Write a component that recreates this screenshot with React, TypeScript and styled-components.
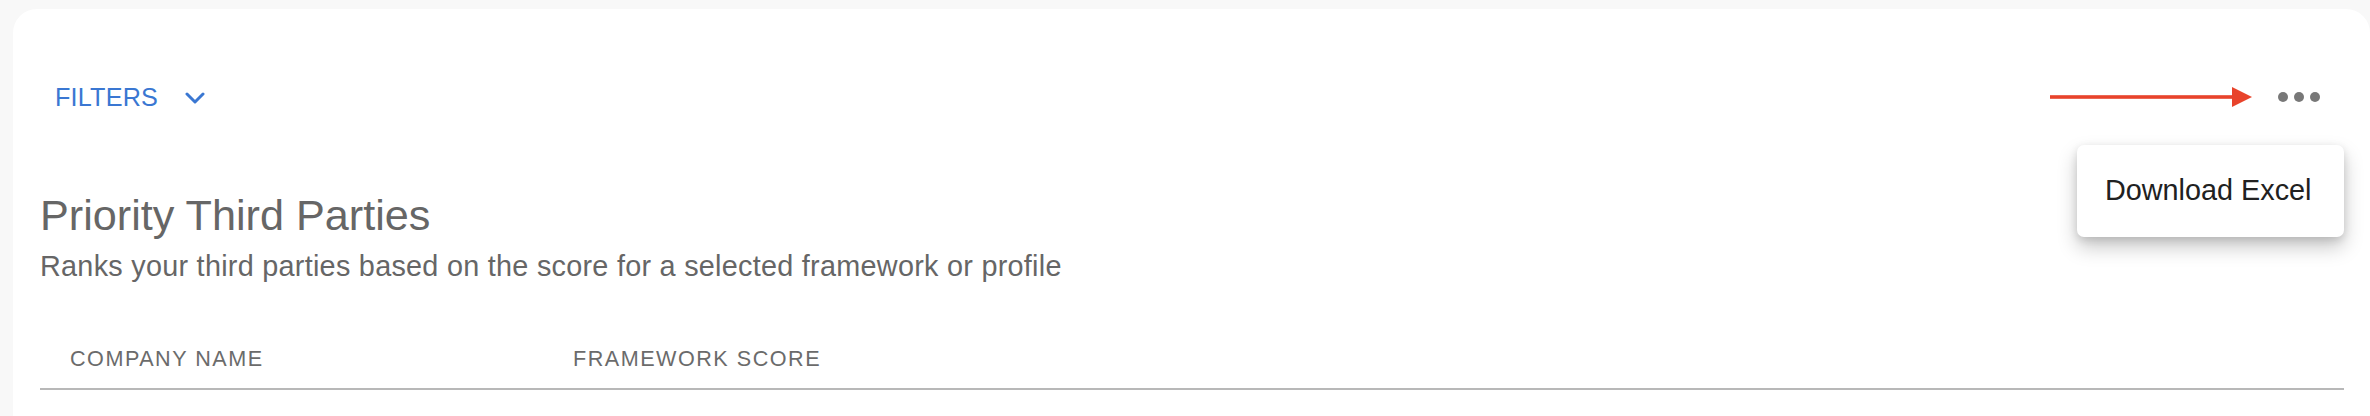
import styled, { createGlobalStyle } from "styled-components"

const GlobalStyle = createGlobalStyle`
  body {
    margin: 0;
    background: #f8f8f8;
    font-family: "Liberation Sans", Arial, Helvetica, sans-serif;
  }
`

const columns = [
  { label: "Company Name", width: 503 },
  { label: "Framework Score", width: 0 },
]

const App = () => {
  return (
    <>
      <GlobalStyle />
      <StyledPage>
        <StyledCard>
          <StyledToolbar>
            <StyledFilterButton>
              FILTERS
              <StyledChevron width="20" height="12" viewBox="0 0 20 12">
                <polyline
                  points="2,2 10,10 18,2"
                  fill="none"
                  stroke="#3a77d2"
                  strokeWidth="3"
                  strokeLinecap="round"
                  strokeLinejoin="round"
                />
              </StyledChevron>
            </StyledFilterButton>
            <StyledActions>
              <svg width="202" height="20" viewBox="0 0 202 20">
                <rect x="0" y="8.2" width="186" height="3.6" fill="#e8432b" />
                <polygon points="182,0 202,10 182,20" fill="#e8432b" />
              </svg>
              <StyledMoreButton>
                <StyledDot />
                <StyledDot />
                <StyledDot />
              </StyledMoreButton>
            </StyledActions>
          </StyledToolbar>

          <StyledTitle>Priority Third Parties</StyledTitle>
          <StyledSubtitle>
            Ranks your third parties based on the score for a selected
            framework or profile
          </StyledSubtitle>

          <StyledHeadRow>
            {columns.map((col) => (
              <StyledHeadCell key={col.label} width={col.width}>
                {col.label}
              </StyledHeadCell>
            ))}
          </StyledHeadRow>

          <StyledMenu>
            <StyledMenuItem>Download Excel</StyledMenuItem>
          </StyledMenu>
        </StyledCard>
      </StyledPage>
    </>
  )
}

export default App

const StyledPage = styled.div`
  padding: 9px 0 0 13px;
  height: 416px;
  box-sizing: border-box;
  overflow: hidden;
`

const StyledCard = styled.div`
  position: relative;
  background: #ffffff;
  border-radius: 24px 24px 0 0;
  padding: 53px 26px 40px 27px;
  min-height: 420px;
  box-sizing: border-box;
`

const StyledToolbar = styled.div`
  display: flex;
  justify-content: space-between;
  align-items: center;
  height: 70px;
`

const StyledFilterButton = styled.button`
  display: flex;
  align-items: center;
  gap: 27px;
  padding: 0 15px;
  height: 60px;
  border: none;
  background: none;
  font-family: inherit;
  font-size: 25.2px;
  letter-spacing: 0.2px;
  color: #3a77d2;
  cursor: pointer;
`

const StyledChevron = styled.svg`
  margin-top: 1px;
`

const StyledActions = styled.div`
  display: flex;
  align-items: center;
`

const StyledMoreButton = styled.button`
  display: flex;
  align-items: center;
  gap: 6px;
  padding: 0 24px 0 26px;
  height: 60px;
  border: none;
  background: none;
  cursor: pointer;
`

const StyledDot = styled.span`
  width: 10px;
  height: 10px;
  border-radius: 50%;
  background: #787878;
`

const StyledTitle = styled.h2`
  margin: 55px 0 0;
  font-size: 43.2px;
  font-weight: 400;
  line-height: 57.6px;
  color: #666666;
`

const StyledSubtitle = styled.p`
  margin: 0;
  font-size: 28.8px;
  line-height: 43.2px;
  letter-spacing: 0.27px;
  color: #666666;
`

const StyledHeadRow = styled.div`
  display: flex;
  border-bottom: 2px solid #b8b8b8;
`

const StyledHeadCell = styled.div<{ width: number }>`
  ${(props) => (props.width ? `width: ${props.width}px;` : "flex: 1;")}
  box-sizing: border-box;
  padding: 49px 30px 8px;
  font-size: 21.6px;
  line-height: 43.2px;
  letter-spacing: 1.5px;
  text-transform: uppercase;
  color: #6b6b6b;
`

const StyledMenu = styled.div`
  position: absolute;
  top: 136px;
  right: 26px;
  width: 267px;
  height: 92px;
  display: flex;
  align-items: center;
  background: #ffffff;
  border-radius: 7px;
  box-shadow: 0 10px 20px rgba(0, 0, 0, 0.22), 0 3px 8px rgba(0, 0, 0, 0.12);
`

const StyledMenuItem = styled.div`
  padding: 0 28px;
  font-size: 28.8px;
  line-height: 43.2px;
  color: #212121;
`
